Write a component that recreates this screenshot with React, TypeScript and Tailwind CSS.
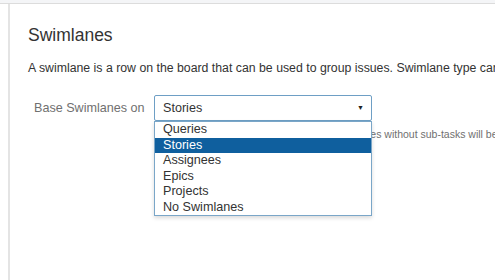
const options = ["Queries", "Stories", "Assignees", "Epics", "Projects", "No Swimlanes"];

export default function App() {
  return (
    <div
      className="h-[280px] w-[495px] overflow-hidden bg-white text-[#333]"
      style={{ fontFamily: '"Liberation Sans", Arial, sans-serif' }}
    >
      {/* top strip */}
      <div className="h-[4px] border-b border-[#dcdcdc] bg-[#f4f5f7]" />
      <div className="flex h-full">
        {/* left gutter */}
        <div className="w-[10px] shrink-0 border-r-2 border-[#e4e4e4] bg-white" />
        <main className="min-w-0 flex-1 pl-[18px] pt-[20px]">
          <h2 className="whitespace-nowrap text-[17.5px] leading-[22px]">Swimlanes</h2>
          <p className="mt-[13px] whitespace-nowrap text-[12.3px] leading-[18px]">
            A swimlane is a row on the board that can be used to group issues. Swimlane type can be changed below.
          </p>
          <div className="mt-[18px] flex items-start pl-[6px]">
            <label className="w-[120px] shrink-0 whitespace-nowrap pt-[5px] text-[12.6px] leading-[16px] text-[#707070]">
              Base Swimlanes on
            </label>
            <div className="relative w-[218px] shrink-0">
              <div className="flex h-[26px] items-center justify-between rounded-[2px] border border-[#6e9fc5] bg-white pl-[8px] pr-[7px] text-[12.6px]">
                <span>Stories</span>
                <span className="text-[7px] text-[#222]">▼</span>
              </div>
              <p className="mt-[6px] whitespace-nowrap text-[10.5px] leading-[14px] text-[#707070]">
                Sub-tasks are all grouped by parent story. Issues without sub-tasks will be shown in a separate lane.
              </p>
              {/* open dropdown list */}
              <ul className="absolute left-0 top-[26px] w-[218px] border border-[#7aa6c8] bg-white shadow-[0_2px_4px_rgba(0,0,0,0.15)]">
                {options.map((o) => (
                  <li
                    key={o}
                    className={
                      o === "Stories"
                        ? "h-[15.5px] bg-[#0f5f9e] pl-[8px] text-[12.6px] leading-[15.5px] text-white"
                        : "h-[15.5px] pl-[8px] text-[12.6px] leading-[15.5px] text-[#333]"
                    }
                  >
                    {o}
                  </li>
                ))}
              </ul>
            </div>
          </div>
        </main>
      </div>
    </div>
  );
}
